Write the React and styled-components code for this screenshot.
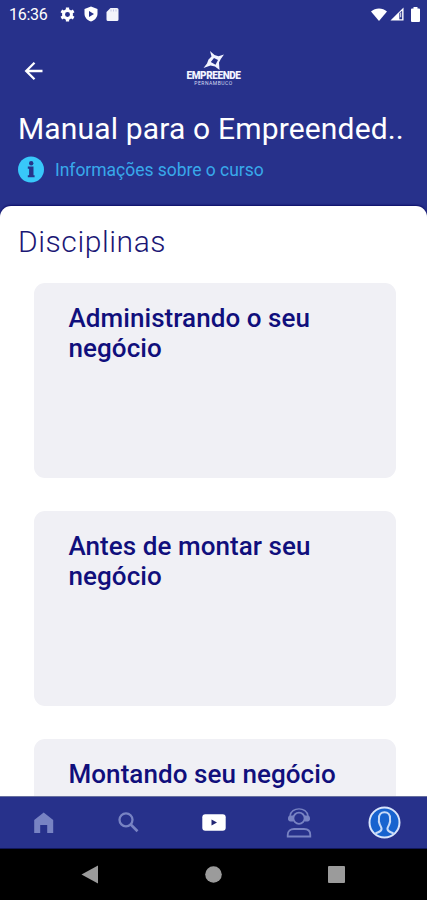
import React from 'react';
import styled, { createGlobalStyle } from 'styled-components';

const GlobalStyle = createGlobalStyle`
  * { box-sizing: border-box; }
  body { margin: 0; background: #27318b; font-family: Roboto, "Noto Sans", sans-serif; }
  svg { display: block; flex: none; }
`;

const Screen = styled.div`
  width: 427px;
  height: 900px;
  display: flex;
  flex-direction: column;
  overflow: hidden;
  background: #27318b;
`;

const StatusBar = styled.header`
  height: 28px;
  flex: none;
  display: flex;
  align-items: center;
  justify-content: space-between;
  padding: 0 7px 0 9px;
  color: #fff;
`;

const StatusGroup = styled.div`
  display: flex;
  align-items: center;
  gap: ${(p) => p.$gap}px;
`;

const Clock = styled.span`
  width: 40px;
  margin-right: 2px;
  padding-top: 2px;
  font-size: 16px;
  line-height: 20px;
  letter-spacing: -0.3px;
  white-space: nowrap;
`;

const BatterySlot = styled.span`
  margin-left: 4px;
`;

const AppBar = styled.div`
  height: 80px;
  flex: none;
  display: grid;
  grid-template-columns: 1fr 56px 1fr;
  padding: 0 18px 0 24px;
`;

const BackButton = styled.button`
  width: 20px;
  height: 20px;
  margin-top: 33px;
  padding: 0;
  border: 0;
  background: none;
  color: #fff;
`;

const Brand = styled.div`
  margin-top: 23px;
  margin-left: -6px;
  display: flex;
  flex-direction: column;
  align-items: center;
  color: #f2f4ff;
`;

const BrandName = styled.span`
  font-size: 10px;
  font-weight: 900;
  line-height: 9px;
  white-space: nowrap;
  letter-spacing: -0.4px;
`;

const BrandRegion = styled.span`
  font-size: 5px;
  line-height: 6px;
  letter-spacing: 0.5px;
  white-space: nowrap;
  color: #d5d9f2;
`;

const CourseHeader = styled.section`
  height: 98px;
  flex: none;
  padding: 2px 18px 0;
`;

const CourseTitle = styled.h1`
  margin: 0;
  color: #fff;
  font-size: 30px;
  font-weight: 400;
  line-height: 38px;
  letter-spacing: 0.16px;
  white-space: nowrap;
`;

const InfoLink = styled.a`
  display: flex;
  align-items: center;
  gap: 11px;
  height: 28px;
  margin-top: 7px;
  color: #38a9ea;
  font-size: 17.5px;
  white-space: nowrap;
`;

const InfoLabel = styled.span`
  padding-top: 2px;
  letter-spacing: -0.03px;
`;

const Sheet = styled.main`
  height: 590px;
  flex: none;
  overflow: hidden;
  padding: 15px 31.5px 0 33.5px;
  background: #fff;
  border-radius: 11px 11px 0 0;
  box-shadow: 0 -1px 2px #0c0d68;
`;

const SectionTitle = styled.h2`
  margin: 0 0 20px -15.5px;
  color: #1b1775;
  font-size: 30px;
  font-weight: 300;
  line-height: 42px;
  letter-spacing: 0.58px;
`;

const CardList = styled.div`
  display: flex;
  flex-direction: column;
  gap: 33px;
`;

const Card = styled.article`
  height: 195px;
  flex: none;
  padding: 19.500px 35px;
  border-radius: 11px;
  background: #f0f0f5;
`;

const CardTitle = styled.h3`
  margin: 0;
  color: #100f7c;
  font-size: 26px;
  font-weight: 500;
  line-height: 30.4px;
  letter-spacing: 0.06px;
`;

const TabBar = styled.nav`
  height: 53px;
  flex: none;
  display: grid;
  grid-template-columns: repeat(5, 1fr);
  align-items: center;
  justify-items: center;
  padding-left: 1px;
  border-top: 1px solid #68709f;
  border-bottom: 1px solid #11175a;
`;

const Tab = styled.button`
  display: grid;
  place-items: center;
  padding: 0;
  border: 0;
  background: none;
  color: ${(p) => (p.$active ? '#fff' : '#7883c3')};
`;

const SystemBar = styled.footer`
  height: 51px;
  flex: none;
  display: flex;
  justify-content: space-between;
  align-items: center;
  padding: 0 82px 0 81px;
  background: #000;
  color: #9b9b9b;
`;

const GearIcon = () => (
  <svg width="17" height="17" viewBox="0 0 24 24" fill="none" stroke="currentColor">
    <circle cx="12" cy="12" r="5.600" strokeWidth="4.200" />
    <path d="M12 2v4M12 18v4M3.300 7l3.500 2M17.200 15l3.500 2M3.300 17l3.500-2M17.200 9l3.500-2" strokeWidth="4.600" />
  </svg>
);

const ShieldIcon = () => (
  <svg width="14" height="16" viewBox="0 0 14 16" fill="currentColor" fillRule="evenodd">
    <path d="M7 .5 13.500 3v4.500c0 3.800-2.600 6.700-6.500 8-3.900-1.300-6.500-4.200-6.500-8V3zM5 5v6l5-3z" />
  </svg>
);

const SdCardIcon = () => (
  <svg width="13" height="15" viewBox="0 0 12 15">
    <path d="M4 1h6.500A1.500 1.500 0 0 1 12 2.500v10a1.500 1.500 0 0 1-1.500 1.500h-9A1.500 1.500 0 0 1 0 12.500V5z" fill="#f2f3fb" />
    <path d="M4.500 2.500v2M7 2.500v2M9.500 2.500v2" stroke="#c3c7e4" strokeWidth="1" />
  </svg>
);

const WifiIcon = () => (
  <svg width="16" height="13" viewBox="0 0 16 13" fill="currentColor">
    <path d="M0 3.500C4.500-.5 11.500-.5 16 3.500L8 13z" />
  </svg>
);

const SignalIcon = () => (
  <svg width="14" height="14" viewBox="0 0 15 14" fill="currentColor" fillRule="evenodd">
    <path d="M14.500 0v14H.5zM10 6v6.500h3V3.500z" />
    <path d="M11 5.500h1v5h-1z" />
  </svg>
);

const BatteryIcon = () => (
  <svg width="9" height="15" viewBox="0 0 9 15" fill="currentColor">
    <path d="M2.500 0h4v1.500H8a1 1 0 0 1 1 1V14a1 1 0 0 1-1 1H1a1 1 0 0 1-1-1V2.500a1 1 0 0 1 1-1h1.500z" />
  </svg>
);

const BackIcon = () => (
  <svg width="20" height="20" viewBox="0 0 20 20" fill="none" stroke="currentColor" strokeWidth="2.300">
    <path d="M18.500 10H3M10.500 1.700 2.200 10l8.300 8.300" />
  </svg>
);

const BrandMark = () => (
  <svg width="24" height="20" viewBox="0 0 24 20" fill="currentColor" fillRule="evenodd">
    <path d="M8 0 12.500 4 16.500 5.300 22 3.500 18.800 8 17 11.500 17.500 19 13 15.500 8.500 14.500 1.500 17 5 12.500 6.500 8.500 9.500 5.500zM12 7 8.800 11l4.700 2.700 2.500-4.700z" />
  </svg>
);

const InfoIcon = () => (
  <svg width="26" height="27" viewBox="0 0 26 27">
    <circle cx="13" cy="13.500" r="13" fill="#38c8fa" />
    <circle cx="13.200" cy="7.200" r="2.200" fill="#26348b" />
    <path d="M9.800 10.500h5.700v8.700h1.100v2H9.800v-2h1.300v-6.500H9.800z" fill="#26348b" />
  </svg>
);

const HomeIcon = () => (
  <svg width="20" height="22" viewBox="0 0 20 22" fill="currentColor">
    <path d="M9.700 .5 19.200 8v13h-6v-8h-7v8h-6V8z" />
  </svg>
);

const SearchIcon = () => (
  <svg width="21" height="21" viewBox="0 0 21 21" fill="none" stroke="currentColor">
    <circle cx="8" cy="7.800" r="6.500" strokeWidth="2.300" />
    <path d="m12.500 12.300 7 7" strokeWidth="2.700" />
  </svg>
);

const VideoIcon = () => (
  <svg width="24" height="18" viewBox="0 0 24 18">
    <rect x=".3" y=".3" width="23.400" height="16.400" rx="3" fill="currentColor" />
    <path d="M9.500 5.500v6l5.500-3z" fill="#222775" />
  </svg>
);

const SupportIcon = () => (
  <svg width="26" height="30" viewBox="0 0 26 30" fill="none" stroke="currentColor" strokeWidth="1.800">
    <path d="M4 8C5-1.500 21-1.500 22 8" strokeWidth="1.400" />
    <circle cx="13" cy="10.200" r="5.600" />
    <path d="M4.500 7.500H7v6H4.500a2.500 2.500 0 0 1-2.500-3c0-1.700.9-3 2.500-3zM21.500 7.500H19v6h2.500a2.500 2.500 0 0 0 2.500-3c0-1.700-.9-3-2.500-3z" fill="currentColor" stroke="none" />
    <path d="M1.700 28.500v-1.500c0-4 3-6 6.300-6h10c3.500 0 6.300 2 6.300 6v1.500z" />
  </svg>
);

const ProfileIcon = () => (
  <svg width="34" height="33" viewBox="-1 0 34 33" fill="none">
    <circle cx="16.500" cy="16.500" r="15" fill="#1763cf" stroke="#d9e5fb" strokeWidth="2" />
    <path d="M7.500 27.500c2.200-1.300 5.500-1.500 6-4.200.3-2-1-3.300-1.700-4.800-.7-1.400-1.300-3.500-.8-6C10.700 8.300 13 6.300 16.500 6.300s5.800 2 5.500 6.200c.5 2.500-.1 4.600-.8 6-.7 1.500-2 2.800-1.700 4.800.5 2.700 3.800 2.900 6 4.200" stroke="#c7daf8" strokeWidth="2" />
  </svg>
);

const SystemBackIcon = () => (
  <svg width="18" height="19" viewBox="0 0 18 19" fill="currentColor"><path d="M17 .5v18L.5 9.500z" /></svg>
);
const SystemHomeIcon = () => (
  <svg width="17" height="17" viewBox="0 0 17 17" fill="currentColor"><circle cx="8.500" cy="8.500" r="8.300" /></svg>
);
const SystemRecentsIcon = () => (
  <svg width="17" height="17" viewBox="0 0 17 17" fill="currentColor"><rect width="17" height="17" rx="1" /></svg>
);

const subjects = ['Administrando o seu negócio', 'Antes de montar seu negócio', 'Montando seu negócio'];

export default function App() {
  return (
    <Screen>
      <GlobalStyle />
      <StatusBar>
        <StatusGroup $gap={8}>
          <Clock>16:36</Clock>
          <GearIcon />
          <ShieldIcon />
          <SdCardIcon />
        </StatusGroup>
        <StatusGroup $gap={3}>
          <WifiIcon />
          <SignalIcon />
          <BatterySlot><BatteryIcon /></BatterySlot>
        </StatusGroup>
      </StatusBar>
      <AppBar>
        <BackButton aria-label="Voltar"><BackIcon /></BackButton>
        <Brand>
          <BrandMark />
          <BrandName>EMPREENDE</BrandName>
          <BrandRegion>PERNAMBUCO</BrandRegion>
        </Brand>
      </AppBar>
      <CourseHeader>
        <CourseTitle>Manual para o Empreended..</CourseTitle>
        <InfoLink><InfoIcon /><InfoLabel>Informações sobre o curso</InfoLabel></InfoLink>
      </CourseHeader>
      <Sheet>
        <SectionTitle>Disciplinas</SectionTitle>
        <CardList>
          {subjects.map((name) => (
            <Card key={name}><CardTitle>{name}</CardTitle></Card>
          ))}
        </CardList>
      </Sheet>
      <TabBar>
        <Tab aria-label="Início"><HomeIcon /></Tab>
        <Tab aria-label="Buscar"><SearchIcon /></Tab>
        <Tab aria-label="Cursos" $active><VideoIcon /></Tab>
        <Tab aria-label="Suporte"><SupportIcon /></Tab>
        <Tab aria-label="Perfil"><ProfileIcon /></Tab>
      </TabBar>
      <SystemBar>
        <SystemBackIcon />
        <SystemHomeIcon />
        <SystemRecentsIcon />
      </SystemBar>
    </Screen>
  );
}
